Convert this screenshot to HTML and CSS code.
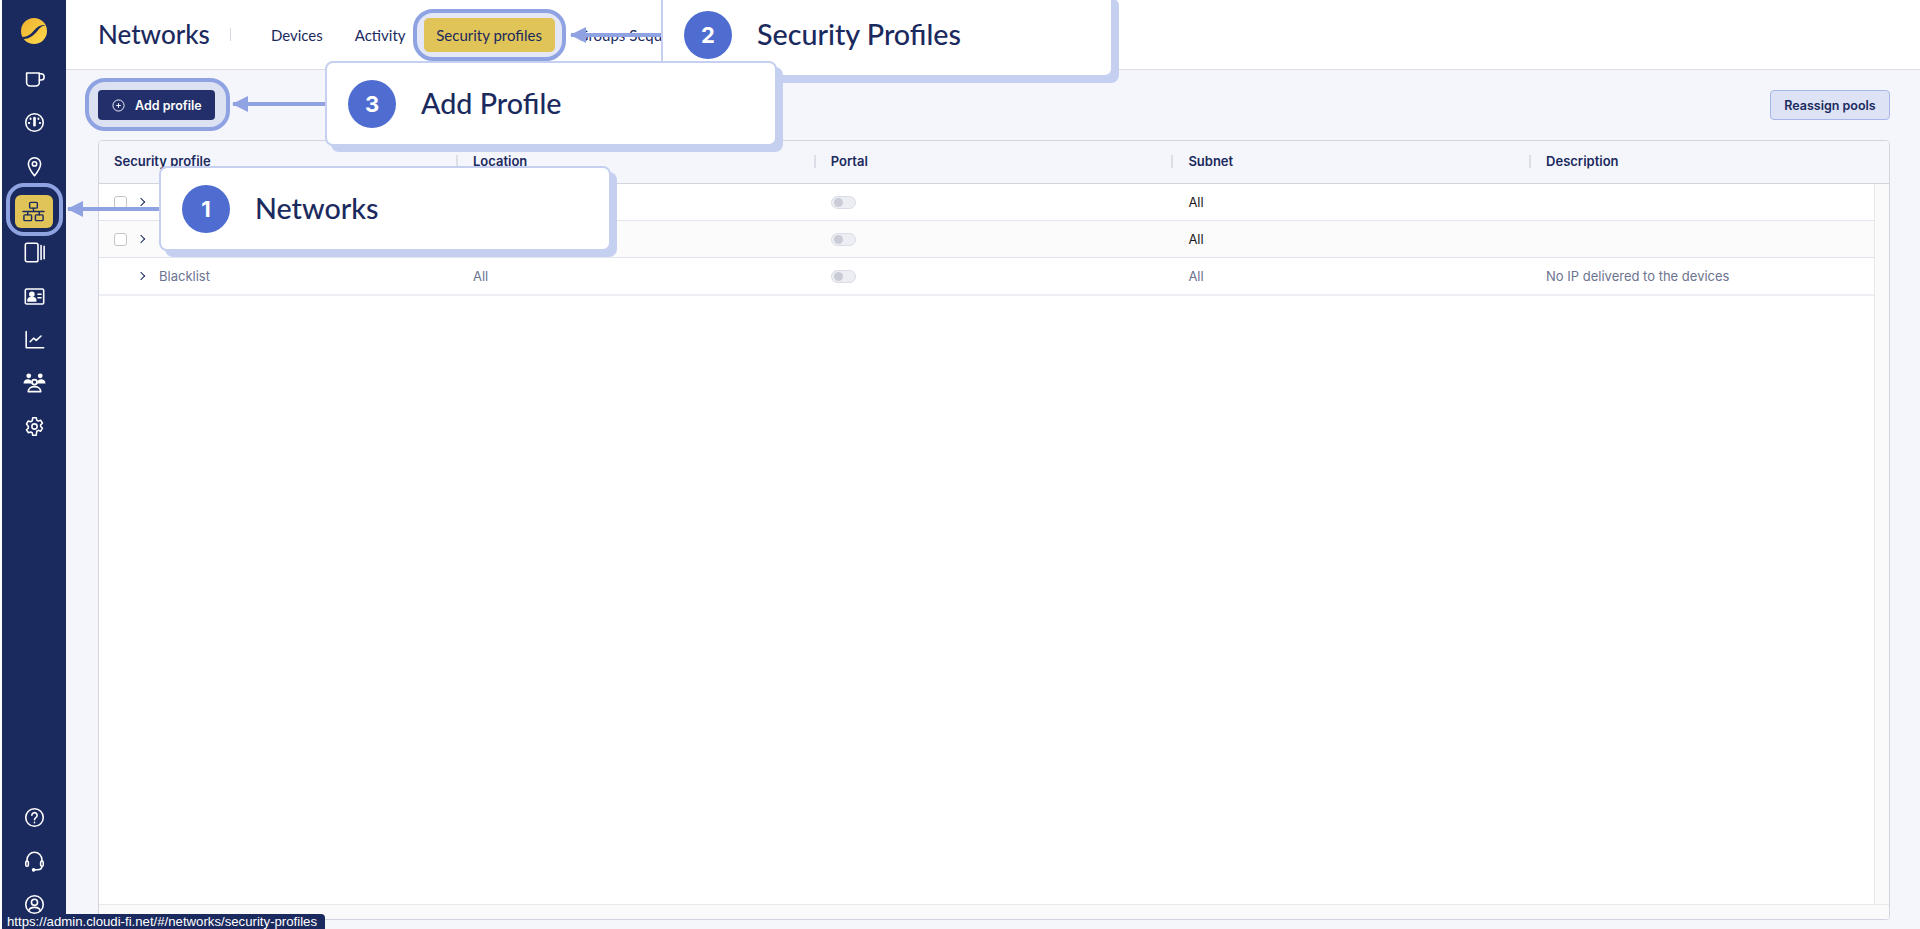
FILE: index.html
```html
<!DOCTYPE html>
<html lang="en">

<head>
    <meta charset="utf-8">
    <title>Networks</title>
    <link rel="stylesheet" href="styles.css">
</head>

<body>
    <div class="app">
        <nav class="sidebar">
            <div class="logo">
                <svg width="28" height="28" viewBox="0 0 28 28">
                    <defs>
                        <linearGradient id="sun" x1="0" y1="0" x2="1" y2="1">
                            <stop offset="0" stop-color="#eeb02e"/>
                            <stop offset="1" stop-color="#ffdb4d"/>
                        </linearGradient>
                    </defs>
                    <circle cx="14" cy="14" r="13" fill="url(#sun)"/>
                    <path d="M2 20C8 20 11 17 14 13.500C17 10 20 7.500 26 8C21 9 19 12 16.500 15C13.500 18.500 9 22 3.500 22Z" fill="#1b2a5e"/>
                </svg>
            </div>
            <div class="nav-group">
                <a class="nav-item">
                    <svg class="icon" viewBox="0 0 24 24"><path d="M3 4.500h14.500v11a4 4 0 0 1-4 4H7a4 4 0 0 1-4-4z"/><path d="M17.500 5.500h2a3 3 0 0 1 0 7h-2"/></svg>
                </a>
                <a class="nav-item">
                    <svg class="icon" viewBox="0 0 24 24"><circle cx="12" cy="12" r="10"/><path d="M12 7v8" stroke-width="3"/><path d="M7.500 7.500v.5M16.500 7.500v.5M5.500 12.500h.5M18 12.500h.5" stroke-width="2.200"/></svg>
                </a>
                <a class="nav-item">
                    <svg class="icon" viewBox="0 0 24 24"><path d="M12 22.500C8 17.500 5 13.500 5 9a7 7 0 0 1 14 0C19 13.500 16 17.500 12 22.500z"/><circle cx="12" cy="9" r="2.500"/></svg>
                </a>
                <a class="nav-item is-active">
                    <span class="focus-ring ring-nav">
                        <span class="nav-chip">
                            <svg class="icon icon-dark" viewBox="0 0 24 24"><rect x="8" y="2.500" width="8" height="6" rx="1"/><rect x="2" y="15.500" width="8" height="6" rx="1"/><rect x="14" y="15.500" width="8" height="6" rx="1"/><path d="M1 12h22M12 8.500V12M6 12v3.500M18 12v3.500"/></svg>
                        </span>
                    </span>
                </a>
                <a class="nav-item">
                    <svg class="icon" viewBox="0 0 24 24"><rect x="1.500" y="1.500" width="14.500" height="21" rx="2"/><path d="M19.500 4v16M23 5v14"/></svg>
                </a>
                <a class="nav-item">
                    <svg class="icon" viewBox="0 0 24 24"><rect x="1.500" y="3.500" width="21" height="17" rx="1.500"/><circle cx="9" cy="9.500" r="2.300" fill="#fff"/><path d="M4.500 17c0-5 9-5 9 0z" fill="#fff"/><path d="M16 9.500h3.500M16 13.500h3.500"/></svg>
                </a>
                <a class="nav-item">
                    <svg class="icon" viewBox="0 0 24 24"><path d="M2.500 3v18.500h20"/><path d="M7 14.500l4-4 3 2.500 5.500-5"/></svg>
                </a>
                <a class="nav-item">
                    <svg class="icon icon-wide" viewBox="0 0 24 24"><circle cx="6" cy="5" r="2.500" fill="#fff" stroke="none"/><circle cx="18" cy="5" r="2.500" fill="#fff" stroke="none"/><path d="M.5 13c0-6 9-6 9 0zM14.500 13c0-6 9-6 9 0z" fill="#fff" stroke="none"/><circle cx="12" cy="11.500" r="2.600"/><path d="M5.500 21.500c0-7 13-7 13 0z"/></svg>
                </a>
                <a class="nav-item">
                    <svg class="icon" viewBox="0 0 24 24"><circle cx="12" cy="12" r="3"/><path d="M10 2h4l.6 2.800 1.800 1 2.700-.9 2 3.400-2.100 1.900v1.800l2.100 1.900-2 3.400-2.700-.9-1.800 1L14 22h-4l-.6-2.800-1.800-1-2.700.9-2-3.400 2.100-1.900v-1.800L2.900 9.100l2-3.400 2.700.9 1.800-1z"/></svg>
                </a>
            </div>
            <div class="nav-group nav-bottom">
                <a class="nav-item">
                    <svg class="icon" viewBox="0 0 24 24"><circle cx="12" cy="12" r="10"/><path d="M9 9.500a3 3 0 1 1 4.500 2.600c-1 .6-1.500 1.100-1.500 2.400"/><path d="M12 17.500v.5"/></svg>
                </a>
                <a class="nav-item">
                    <svg class="icon" viewBox="0 0 24 24"><path d="M3.500 12v-2a8.500 8.500 0 0 1 17 0v2"/><rect x="2" y="11.500" width="3" height="6" rx="1.500"/><rect x="19" y="11.500" width="3" height="6" rx="1.500"/><path d="M20.500 17.500c0 3-2 4-5 4h-3"/><circle cx="11" cy="21.500" r="1.200" fill="#fff"/></svg>
                </a>
                <a class="nav-item">
                    <svg class="icon" viewBox="0 0 24 24"><circle cx="12" cy="12" r="10"/><circle cx="12" cy="9.500" r="3.500"/><path d="M5.500 19c1-5 12-5 13 0"/></svg>
                </a>
            </div>
        </nav>

        <div class="main">
            <header class="topbar">
                <h1 class="page-title">Networks</h1>
                <span class="title-sep"></span>
                <div class="tabs">
                    <a class="tab">Devices</a>
                    <a class="tab">Activity</a>
                    <span class="focus-ring ring-tab"><a class="tab-active">Security profiles</a></span>
                    <a class="tab tab-tight">Groups</a>
                    <a class="tab tab-cut">Sequ</a>
                </div>
            </header>

            <div class="toolbar">
                <span class="focus-ring ring-btn">
                    <button class="btn btn-primary">
                        <svg class="btn-icon" viewBox="0 0 14 14"><circle cx="7" cy="7" r="6"/><path d="M7 4.500v5M4.500 7h5"/></svg>
                        Add profile
                    </button>
                </span>
                <button class="btn btn-soft">Reassign pools</button>
            </div>

            <div class="table">
                <div class="row row-head">
                    <div class="cell cell-first">Security profile</div>
                    <div class="cell">Location</div>
                    <div class="cell">Portal</div>
                    <div class="cell">Subnet</div>
                    <div class="cell">Description</div>
                </div>
                <div class="table-body">
                    <div class="rows">
                        <div class="row">
                            <div class="cell cell-first"><span class="check"></span><span class="chevron"></span></div>
                            <div class="cell"></div>
                            <div class="cell"><span class="toggle"></span></div>
                            <div class="cell cell-dark">All</div>
                            <div class="cell"></div>
                        </div>
                        <div class="row row-alt">
                            <div class="cell cell-first"><span class="check"></span><span class="chevron"></span></div>
                            <div class="cell"></div>
                            <div class="cell"><span class="toggle"></span></div>
                            <div class="cell cell-dark">All</div>
                            <div class="cell"></div>
                        </div>
                        <div class="row row-last">
                            <div class="cell cell-first"><span class="check check-none"></span><span class="chevron"></span><span class="row-name">Blacklist</span></div>
                            <div class="cell">All</div>
                            <div class="cell"><span class="toggle"></span></div>
                            <div class="cell">All</div>
                            <div class="cell">No IP delivered to the devices</div>
                        </div>
                    </div>
                    <div class="scroll-y"></div>
                </div>
                <div class="scroll-x"></div>
            </div>
        </div>
    </div>

    <!-- guide callouts, they float over the page -->
    <div class="arrow arrow-1"></div>
    <div class="arrow arrow-2"></div>
    <div class="arrow arrow-3"></div>

    <div class="callout callout-2"><span class="num">2</span><span class="callout-text">Security Profiles</span></div>
    <div class="callout callout-3"><span class="num">3</span><span class="callout-text">Add Profile</span></div>
    <div class="callout callout-1"><span class="num">1</span><span class="callout-text">Networks</span></div>

    <div class="status-url">https://admin.cloudi-fi.net/#/networks/security-profiles</div>
</body>

</html>
```

FILE: styles.css
```css
* {
    box-sizing: border-box;
}

html, body {
    height: 100%;
}

body {
    margin: 0;
    background: #fff;
    color: #1b2a5e;
    font-family: Inter, "Liberation Sans", sans-serif;
    overflow: hidden;
    position: relative;
}

.app {
    display: flex;
    height: 929px;
    padding-left: 2px;
}

/* sidebar */
.sidebar {
    width: 64px;
    flex: none;
    background: #1b2a5e;
    display: flex;
    flex-direction: column;
    align-items: center;
}

.logo {
    height: 58px;
    width: 100%;
    display: flex;
    justify-content: center;
    padding-top: 17px;
}

.nav-group {
    width: 100%;
    display: flex;
    flex-direction: column;
    align-items: center;
}

.nav-bottom {
    margin-top: auto;
    padding-bottom: 3px;
}

.nav-item {
    height: 43.300px;
    width: 100%;
    display: flex;
    align-items: center;
    justify-content: center;
}

.icon {
    width: 21px;
    height: 21px;
    fill: none;
    stroke: #fff;
    stroke-width: 1.800;
    stroke-linecap: round;
    stroke-linejoin: round;
}

.icon-wide {
    width: 23px;
    height: 23px;
}

.icon-dark {
    width: 23px;
    height: 23px;
    stroke: #1b2a5e;
    stroke-width: 1.500;
}

.focus-ring {
    display: inline-flex;
    flex: none;
    border: 4px solid #8fa3e3;
}

.ring-nav {
    padding: 8px 6px 4px 5px;
    border-radius: 18px;
}

.nav-chip {
    width: 38px;
    height: 33px;
    border-radius: 6px;
    background: #e0c457;
    display: flex;
    align-items: center;
    justify-content: center;
}

/* top bar */
.main {
    flex: 1;
    min-width: 0;
    display: flex;
    flex-direction: column;
    background: #f5f6fb;
}

.topbar {
    height: 70px;
    flex: none;
    background: #fff;
    border-bottom: 1px solid #dcdfe8;
    display: flex;
    align-items: center;
    padding-left: 32px;
}

.page-title {
    margin: 0 0 2px;
    font-family: Lato, sans-serif;
    font-size: 26px;
    font-weight: 500;
    color: #1b2a5e;
}

.title-sep {
    width: 1px;
    height: 13px;
    background: #d5d8e2;
    margin-left: 20px;
    margin-right: 40px;
}

.tabs {
    display: flex;
    align-items: center;
    align-self: stretch;
    font-family: Lato, sans-serif;
    font-size: 15px;
    white-space: nowrap;
}

.tab {
    margin-right: 32px;
    color: #1b2a5e;
}

.ring-tab {
    margin: 0 12px 0 -25px;
    padding: 5px 7px;
    border-radius: 20px;
    background: #e3e7f6;
}

.tab-active {
    width: 131px;
    height: 34px;
    line-height: 34px;
    text-align: center;
    border-radius: 5px;
    background: #e0c457;
    color: #1b2a5e;
}

.tab-tight {
    margin-right: 4px;
}

.tab-cut {
    margin-right: 0;
}

/* toolbar */
.toolbar {
    flex: none;
    height: 70px;
    padding: 8px 30px 0 19px;
    display: flex;
    justify-content: space-between;
    align-items: flex-start;
}

.ring-btn {
    padding: 8px 11px 7px 9px;
    border-radius: 20px;
    background: #dde2f3;
}

.btn {
    height: 30px;
    border-radius: 4px;
    font-family: Inter, sans-serif;
    font-size: 12.500px;
    font-weight: 600;
    display: flex;
    align-items: center;
}

.btn-primary {
    width: 117px;
    padding: 0 0 0 14px;
    gap: 10px;
    background: #222f6a;
    color: #fff;
    border: 0;
}

.btn-icon {
    width: 13px;
    height: 13px;
    fill: none;
    stroke: #fff;
    stroke-width: 1;
}

.btn-soft {
    width: 120px;
    margin-top: 12px;
    justify-content: center;
    padding: 0;
    background: #dde2f5;
    border: 1px solid #a9b7e8;
    color: #1b2a5e;
}

/* table */
.table {
    flex: 1;
    min-height: 0;
    margin: 0 30px 9px 32px;
    border: 1px solid #d2d5e0;
    border-radius: 4px;
    background: #fff;
    display: flex;
    flex-direction: column;
    overflow: hidden;
}

.row {
    display: grid;
    grid-template-columns: 358px 357.700px 357.700px 357.700px 1fr;
    align-items: center;
    height: 37px;
    border-bottom: 1px solid #e3e5ee;
    font-size: 13px;
    color: #6b7390;
}

.row-head {
    flex: none;
    height: 43px;
    padding-bottom: 2px;
    background: #f5f6fb;
    border-bottom: 1px solid #d2d5e0;
    color: #1b2a5e;
    font-weight: 600;
}

.row-head .cell {
    height: 13px;
    line-height: 13px;
    border-left: 2px solid #dcdfe8;
    margin-left: -1px;
    padding-left: 15px;
}

.row-head .cell-first {
    border-left: 0;
    margin-left: 0;
}

.row-alt {
    background: #fbfbfc;
}

.row-last {
    border-bottom-color: #eeeff4;
    box-shadow: 0 1px 0 #eeeff4;
}

.cell {
    padding-left: 16px;
    display: flex;
    align-items: center;
    white-space: nowrap;
}

.cell-first {
    padding-left: 15px;
}

.cell-dark {
    color: #1a1a1a;
}

.check {
    width: 13px;
    height: 13px;
    border: 1px solid #c4c4c8;
    border-radius: 3px;
    background: #fff;
    margin-right: 11px;
}

.check-none {
    visibility: hidden;
}

.chevron {
    width: 6px;
    height: 6px;
    border-top: 1.500px solid #1b2a5e;
    border-right: 1.500px solid #1b2a5e;
    transform: rotate(45deg);
    margin-right: 15px;
}

.toggle {
    position: relative;
    width: 25px;
    height: 13px;
    border-radius: 7px;
    background: #eceef3;
    border: 1px solid #d9dce6;
}

.toggle::after {
    content: "";
    position: absolute;
    left: 2px;
    top: 1px;
    width: 9px;
    height: 9px;
    border-radius: 50%;
    background: #c9ccd6;
}

.table-body {
    flex: 1;
    min-height: 0;
    display: flex;
}

.rows {
    flex: 1;
    min-width: 0;
}

.scroll-y {
    width: 15px;
    flex: none;
    background: #fafafa;
    border-left: 1px solid #e8e8e8;
}

.scroll-x {
    height: 15px;
    flex: none;
    background: #fafafa;
    border-top: 1px solid #e8e8e8;
}

/* callouts */
.callout {
    position: absolute;
    width: 452px;
    height: 85px;
    background: #fff;
    border: 2px solid #c5d0f0;
    border-radius: 8px;
    box-shadow: 6px 6px 0 #c5d0f0;
    display: flex;
    align-items: center;
    padding-left: 21px;
    z-index: 5;
}

.callout-1 {
    left: 159px;
    top: 166px;
}

.callout-2 {
    left: 661px;
    top: -8px;
}

.callout-3 {
    left: 325px;
    top: 61px;
}

.num {
    width: 48px;
    height: 48px;
    flex: none;
    border-radius: 50%;
    background: #4f6dd0;
    color: #fff;
    font-family: Inter, sans-serif;
    font-size: 22px;
    font-weight: 700;
    display: flex;
    align-items: center;
    justify-content: center;
}

.callout-text {
    margin: 0 0 2px 25px;
    font-family: Lato, sans-serif;
    font-size: 28.700px;
    font-weight: 500;
    color: #1b2a5e;
}

.arrow {
    position: absolute;
    height: 4px;
    background: #8fa3e3;
    z-index: 4;
}

.arrow::before {
    content: "";
    position: absolute;
    left: -1px;
    top: -6px;
    border-style: solid;
    border-width: 8px 16px 8px 0;
    border-color: transparent #8fa3e3 transparent transparent;
}

.arrow-1 {
    left: 68px;
    top: 207px;
    width: 92px;
}

.arrow-2 {
    left: 571px;
    top: 33px;
    width: 91px;
}

.arrow-3 {
    left: 233px;
    top: 102px;
    width: 93px;
}

.status-url {
    position: absolute;
    left: 2px;
    bottom: 0;
    height: 15px;
    width: 323px;
    padding-left: 5px;
    background: #1b2a5e;
    border-top-right-radius: 4px;
    color: #fff;
    font-family: "Liberation Sans", sans-serif;
    font-size: 13.200px;
    line-height: 16px;
    white-space: nowrap;
    z-index: 6;
}
```
